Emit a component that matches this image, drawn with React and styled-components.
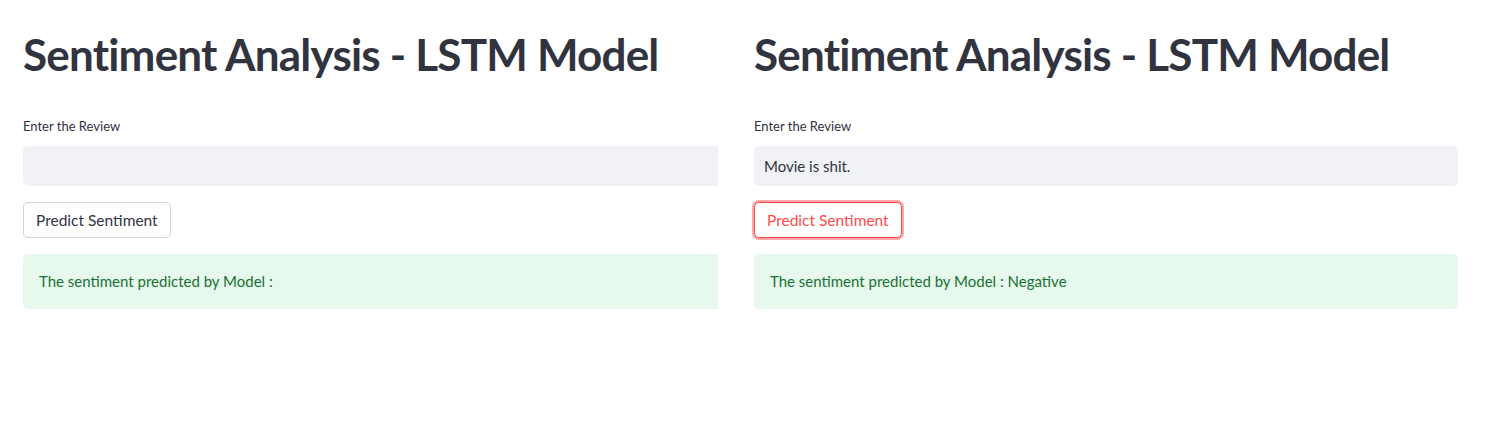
import React from "react";
import styled, { createGlobalStyle } from "styled-components";

const Global = createGlobalStyle`
  html, body { margin: 0; padding: 0; background: #ffffff; }
  body { font-family: Lato, "Noto Sans", sans-serif; color: #31333f; }
`;

const Page = styled.div`
  display: grid;
  grid-template-columns: 718px 1fr;
  width: 1507px;
  height: 448px;
  background: #ffffff;
`;

const Column = styled.section`
  padding-left: ${(p) => p.$inset}px;
  padding-top: 28px;
  overflow: hidden;
`;

const Block = styled.div`
  width: 704px;
  display: flex;
  flex-direction: column;
`;

const Title = styled.h1`
  margin: 0;
  font-family: Lato, sans-serif;
  font-weight: 700;
  font-size: 44px;
  line-height: 1.2;
  color: #31333f;
  letter-spacing: -0.8px;
`;

const Label = styled.label`
  margin-top: 36px;
  font-size: 13px;
  line-height: 18px;
  color: #31333f;
`;

const Input = styled.div`
  margin-top: 11px;
  height: 40px;
  box-sizing: border-box;
  border: 1px solid transparent;
  border-radius: 5px;
  background: #f0f2f6;
  padding: 0 9px;
  display: flex;
  align-items: center;
  font-size: 15px;
  color: #31333f;
`;

const Button = styled.button`
  align-self: flex-start;
  margin-top: 16px;
  height: 36px;
  box-sizing: border-box;
  padding: 0 12px;
  border-radius: 5px;
  background: #ffffff;
  font-family: Lato, sans-serif;
  font-size: 15.5px;
  cursor: pointer;
  border: 1px solid ${(p) => (p.$focused ? "#ff4b4b" : "rgba(49,51,63,0.2)")};
  color: ${(p) => (p.$focused ? "#ff4b4b" : "#31333f")};
  box-shadow: ${(p) => (p.$focused ? "0 0 0 2px rgba(255,75,75,0.5)" : "none")};
`;

const Alert = styled.div`
  margin-top: 16px;
  height: 55px;
  box-sizing: border-box;
  padding: 0 16px;
  border-radius: 5px;
  background: #e7f8ed;
  color: #177233;
  display: flex;
  align-items: center;
  font-size: 15px;
`;

function Panel({ inset, value, focused, result }) {
  return (
    <Column $inset={inset}>
      <Block>
        <Title>Sentiment Analysis - LSTM Model</Title>
        <Label>Enter the Review</Label>
        <Input>{value}</Input>
        <Button $focused={focused}>Predict Sentiment</Button>
        <Alert>The sentiment predicted by Model :{result ? ` ${result}` : ""}</Alert>
      </Block>
    </Column>
  );
}

export default function App() {
  return (
    <>
      <Global />
      <Page>
        <Panel inset={23} value="" focused={false} result="" />
        <Panel inset={36} value="Movie is shit." focused result="Negative" />
      </Page>
    </>
  );
}
